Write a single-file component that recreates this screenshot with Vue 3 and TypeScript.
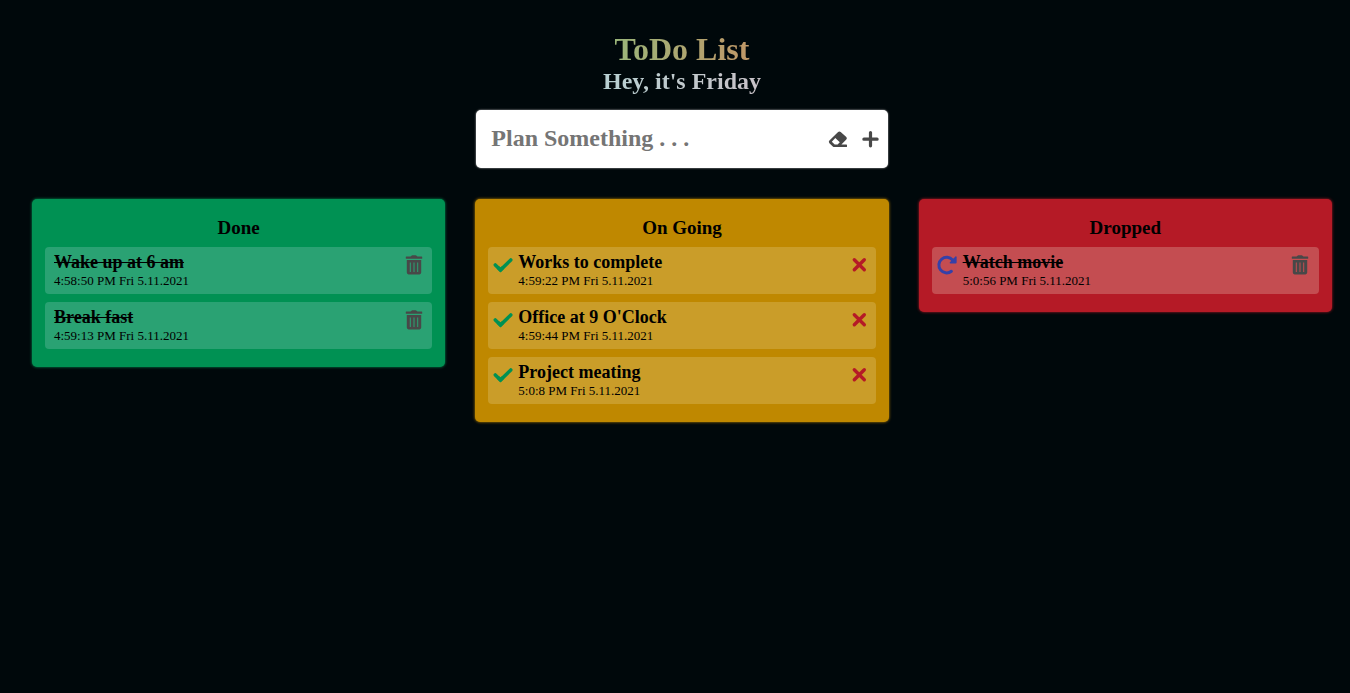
<script setup lang="ts">
import { ref } from 'vue'

type Status = 'done' | 'ongoing' | 'dropped'

interface Task {
  id: number
  title: string
  time: string
  status: Status
}

const columns: { status: Status; label: string }[] = [
  { status: 'done', label: 'Done' },
  { status: 'ongoing', label: 'On Going' },
  { status: 'dropped', label: 'Dropped' },
]

const days = ['Sunday', 'Monday', 'Tuesday', 'Wednesday', 'Thursday', 'Friday', 'Saturday']
const today = days[5]
const draft = ref('')
const tasks = ref<Task[]>([
  { id: 1, title: 'Wake up at 6 am', time: '4:58:50 PM Fri 5.11.2021', status: 'done' },
  { id: 2, title: 'Break fast', time: '4:59:13 PM Fri 5.11.2021', status: 'done' },
  { id: 3, title: 'Works to complete', time: '4:59:22 PM Fri 5.11.2021', status: 'ongoing' },
  { id: 4, title: "Office at 9 O'Clock", time: '4:59:44 PM Fri 5.11.2021', status: 'ongoing' },
  { id: 5, title: 'Project meating', time: '5:0:8 PM Fri 5.11.2021', status: 'ongoing' },
  { id: 6, title: 'Watch movie', time: '5:0:56 PM Fri 5.11.2021', status: 'dropped' },
])

const inColumn = (status: Status) => tasks.value.filter((t) => t.status === status)

function addTask() {
  const title = draft.value.trim()
  if (!title) return
  const d = new Date()
  const hour = d.getHours() % 12 || 12
  const half = d.getHours() < 12 ? 'AM' : 'PM'
  const time = `${hour}:${d.getMinutes()}:${d.getSeconds()} ${half} ${days[d.getDay()].slice(0, 3)} ${d.getDate()}.${d.getMonth() + 1}.${d.getFullYear()}`
  tasks.value.push({ id: Date.now(), title, time, status: 'ongoing' })
  draft.value = ''
}

function removeTask(id: number) {
  tasks.value = tasks.value.filter((t) => t.id !== id)
}
</script>

<template>
  <main class="page">
    <header class="header">
      <h1 class="title">ToDo List</h1>
      <h2 class="greeting">Hey, it's {{ today }}</h2>
    </header>

    <form class="planner" @submit.prevent="addTask">
      <input v-model="draft" class="planner-input" type="text" placeholder="Plan Something . . ." aria-label="Plan something" />
      <button class="icon-button" type="button" aria-label="Clear" @click="draft = ''">
        <svg class="icon" viewBox="0 0 20 20">
          <path fill-rule="evenodd" d="M10.1 3 Q11.4 1.8 12.7 3 L18.3 8 Q19.5 9.3 18.3 10.6 L13.4 15.6 H18.4 Q19 15.6 19 16.2 V17.4 Q19 18 18.4 18 H6.2 Q5.4 18 4.8 17.4 L1.4 14.2 Q.2 12.9 1.4 11.6 Z M7.3 9.1 L3.8 12.8 L6.7 15.6 H9.6 L11.8 13.3 Z" />
        </svg>
      </button>
      <button class="icon-button" type="submit" aria-label="Add">
        <svg class="icon" viewBox="0 0 20 20">
          <path d="M10.5 3.6 V16.8 M3.9 10.2 H17.1" fill="none" stroke="currentColor" stroke-width="3.2" stroke-linecap="round" />
        </svg>
      </button>
    </form>

    <div class="board">
      <section v-for="column in columns" :key="column.status" class="column" :class="column.status">
        <h3 class="column-title">{{ column.label }}</h3>
        <ul class="tasks">
          <li v-for="task in inColumn(column.status)" :key="task.id" class="task">
            <button v-if="task.status === 'ongoing'" class="icon-button check" type="button" aria-label="Mark as done" @click="task.status = 'done'">
              <svg class="icon" viewBox="0 0 20 20">
                <path d="M2.3 9.9 L7.5 15 L17.8 4.9" fill="none" stroke="currentColor" stroke-width="3.5" stroke-linecap="round" />
                <path d="M5 12.5 L7.5 15 L10 12.5" fill="none" stroke="currentColor" stroke-width="3.5" stroke-linejoin="round" />
              </svg>
            </button>
            <button v-if="task.status === 'dropped'" class="icon-button redo" type="button" aria-label="Restore" @click="task.status = 'ongoing'">
              <svg class="icon" viewBox="0 0 20 20">
                <path d="M14.4 16.3 A7.8 7.8 0 1 1 15.6 5" fill="none" stroke="currentColor" stroke-width="3" stroke-linecap="round" />
                <path d="M18.4 1.4 Q19.6 .9 19.6 2.2 V7.4 Q19.6 8.4 18.6 8.4 H13.4 Q12 8.3 12.9 7.2 Z" />
              </svg>
            </button>
            <div class="task-text">
              <div class="task-title">{{ task.title }}</div>
              <div class="task-time">{{ task.time }}</div>
            </div>
            <button v-if="task.status === 'ongoing'" class="icon-button cross" type="button" aria-label="Drop" @click="task.status = 'dropped'">
              <svg class="icon" viewBox="0 0 20 20">
                <path d="M5.3 4.8 L15.3 14.8 M15.3 4.8 L5.3 14.8" fill="none" stroke="currentColor" stroke-width="3.4" stroke-linecap="round" />
              </svg>
            </button>
            <button v-else class="icon-button trash" type="button" aria-label="Delete" @click="removeTask(task.id)">
              <svg class="icon" viewBox="0 0 20 20">
                <path d="M2.4 1.4 H6.6 L7.4 .7 Q7.8 .3 8.4 .3 H11.6 Q12.2 .3 12.6 .7 L13.4 1.4 H17.6 Q18.2 1.4 18.2 2 V3.2 Q18.2 3.8 17.6 3.8 H2.4 Q1.8 3.8 1.8 3.2 V2 Q1.8 1.4 2.4 1.4 Z" />
                <path fill-rule="evenodd" d="M2.8 5 H17.2 V17.6 Q17.2 19.4 15.4 19.4 H4.6 Q2.8 19.4 2.8 17.6 Z M5.8 7.4 V17 H6.8 V7.4 Z M9.5 7.4 V17 H10.5 V7.4 Z M13.2 7.4 V17 H14.2 V7.4 Z" />
              </svg>
            </button>
          </li>
        </ul>
      </section>
    </div>
  </main>
</template>

<style>
body {
  margin: 0;
  background: #00080b;
}
</style>

<style scoped>
.page {
  box-sizing: border-box;
  min-height: 100vh;
  padding: 31px 18px 31px 32px;
  color: #000;
  font-family: "Liberation Serif", "Times New Roman", serif;
}

.header {
  text-align: center;
}

.title,
.greeting {
  margin: 0;
  color: transparent;
  background-clip: text;
  -webkit-background-clip: text;
}

.title {
  font-size: 32px;
  line-height: 36px;
  background-image: linear-gradient(90deg, #00ff99 0%, #9bb57a 45%, #bf9868 55%, #ff3355 100%);
}

.greeting {
  font-size: 24px;
  line-height: 28px;
  background-image: linear-gradient(90deg, #80ffff 0%, #b8d0d2 44%, #c8c2c8 56%, #ff90b0 100%);
}

.planner {
  box-sizing: border-box;
  display: flex;
  align-items: center;
  gap: 12px;
  width: calc((100% - 60px) / 3 - 2px);
  height: 58px;
  margin: 15px auto 31px;
  padding: 0 8px 0 15px;
  background: #fff;
  border-radius: 5px;
  box-shadow: 0 0 2px #ccc;
}

.planner-input {
  flex: 1;
  min-width: 0;
  padding: 0 0 2px;
  border: 0;
  outline: 0;
  background: transparent;
  color: #222;
  font: bold 24px "Liberation Serif", "Times New Roman", serif;
}

.planner-input::placeholder {
  color: #757575;
}

.icon-button {
  flex: none;
  width: 20px;
  height: 20px;
  padding: 0;
  border: 0;
  background: transparent;
  color: #484848;
  cursor: pointer;
}

.icon {
  display: block;
  width: 20px;
  height: 20px;
  fill: currentColor;
}

.board {
  display: grid;
  grid-template-columns: repeat(3, 1fr);
  align-items: start;
  gap: 30px;
}

.column {
  padding: 18px 13px;
  border-radius: 5px;
}

.done {
  background: #009153;
  box-shadow: 0 0 3px #009153;
}

.ongoing {
  background: #bf8800;
  box-shadow: 0 0 3px #bf8800;
}

.dropped {
  background: #b51a26;
  box-shadow: 0 0 3px #b51a26;
}

.column-title {
  margin: 0 0 8px;
  font-size: 19px;
  line-height: 22px;
  text-align: center;
}

.tasks {
  display: grid;
  gap: 8px;
  margin: 0;
  padding: 0;
  list-style: none;
}

.task {
  display: flex;
  align-items: flex-start;
  gap: 5px;
  padding: 5px 7px 6px 5px;
  border-radius: 4px;
}

.task .icon-button {
  margin-top: 3px;
}

.done .task {
  padding: 5px 8px 6px 9px;
  background: #2aa273;
}

.ongoing .task {
  background: #ca9d29;
}

.dropped .task {
  gap: 6px;
  padding-right: 9px;
  background: #c44d51;
}

.task-text {
  flex: 1;
  min-width: 0;
}

.task-title {
  font-size: 18px;
  font-weight: bold;
  line-height: 21px;
}

.done .task-title,
.dropped .task-title {
  text-decoration: line-through;
}

.task-time {
  font-size: 13px;
  line-height: 15px;
}

.check {
  color: #009153;
}

.cross {
  color: #b51a26;
}

.redo {
  color: #3540a8;
}
</style>
